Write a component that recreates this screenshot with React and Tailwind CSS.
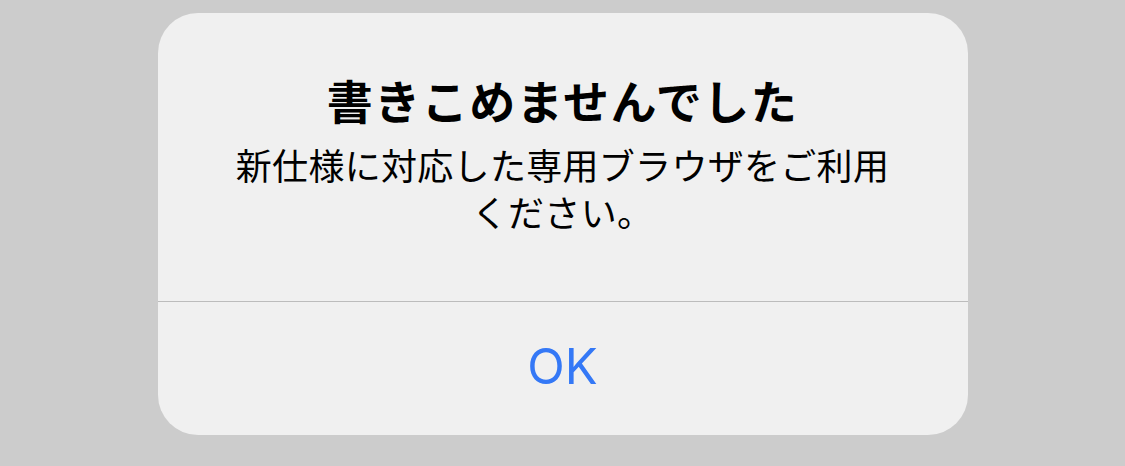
import React from 'react';

const font = { fontFamily: '"Noto Sans CJK JP", "Noto Sans", sans-serif' };

export default function App() {
  return (
    <div className="w-[1125px] h-[466px] bg-[#cccccc] flex justify-center pt-[13px]" style={font}>
      <div className="w-[810px] h-[422px] bg-[#f0f0f0] rounded-[40px] flex flex-col overflow-hidden">
        {/* Message */}
        <div className="h-[288px] flex flex-col items-center pt-[66px]">
          <h1 className="text-[46px] leading-[40px] font-bold text-black tracking-[1.5px]">
            書きこめませんでした
          </h1>
          <p className="mt-[22px] text-[36px] leading-[47px] text-black text-center tracking-[0.3px]">
            新仕様に対応した専用ブラウザをご利用
            <br />
            ください。
          </p>
        </div>
        <div className="h-px bg-[#bcbcbc]" />
        {/* Action */}
        <button className="flex-1 flex items-center justify-center text-[#3478f6] text-[49px] pb-[4px]" style={{ fontFamily: 'Inter, "Noto Sans", sans-serif' }}>
          OK
        </button>
      </div>
    </div>
  );
}
